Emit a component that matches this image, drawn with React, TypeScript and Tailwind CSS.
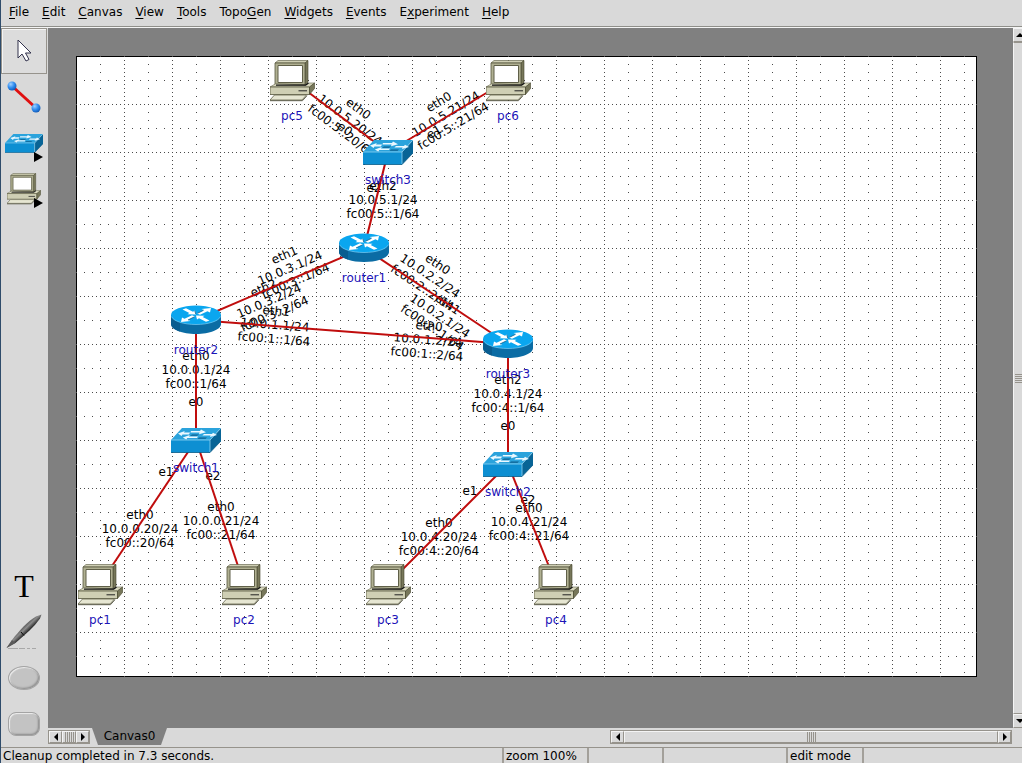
import type { ReactNode } from "react";

type NodeKind = "pc" | "switch" | "router";

interface TopoNode {
  id: string;
  kind: NodeKind;
  x: number;
  y: number;
}

interface LinkLabel {
  x: number;
  y: number;
  angle?: number;
  lines: string[];
}

const GRID = 24;
const CANVAS_W = 901;
const CANVAS_H = 621;

// Canvas coordinates, snapped to the grid.
const nodes: TopoNode[] = [
  { id: "pc5", kind: "pc", x: 216, y: 24 },
  { id: "pc6", kind: "pc", x: 432, y: 24 },
  { id: "switch3", kind: "switch", x: 312, y: 96 },
  { id: "router1", kind: "router", x: 288, y: 192 },
  { id: "router2", kind: "router", x: 120, y: 264 },
  { id: "router3", kind: "router", x: 432, y: 288 },
  { id: "switch1", kind: "switch", x: 120, y: 384 },
  { id: "switch2", kind: "switch", x: 432, y: 408 },
  { id: "pc1", kind: "pc", x: 24, y: 528 },
  { id: "pc2", kind: "pc", x: 168, y: 528 },
  { id: "pc3", kind: "pc", x: 312, y: 528 },
  { id: "pc4", kind: "pc", x: 480, y: 528 },
];

const links: [string, string][] = [
  ["pc5", "switch3"],
  ["pc6", "switch3"],
  ["switch3", "router1"],
  ["router1", "router2"],
  ["router1", "router3"],
  ["router2", "router3"],
  ["router2", "switch1"],
  ["router3", "switch2"],
  ["switch1", "pc1"],
  ["switch1", "pc2"],
  ["switch2", "pc3"],
  ["switch2", "pc4"],
];

const linkLabels: LinkLabel[] = [
  { x: 274, y: 64, angle: 36.9, lines: ["eth0", "10.0.5.20/24", "fc00:5::20/64"] },
  { x: 269, y: 73, angle: 36.9, lines: ["e0"] },
  { x: 370, y: 58, angle: -31, lines: ["eth0", "10.0.5.21/24", "fc00:5::21/64"] },
  { x: 358, y: 76, angle: -31, lines: ["e1"] },
  { x: 298, y: 132, lines: ["e2"] },
  { x: 307, y: 144, lines: ["eth2", "10.0.5.1/24", "fc00:5::1/64"] },
  { x: 214, y: 212, angle: -23.2, lines: ["eth1", "10.0.3.1/24", "fc00:3::1/64"] },
  { x: 193, y: 245, angle: -23.2, lines: ["eth2", "10.0.3.2/24", "fc00:3::2/64"] },
  { x: 354, y: 220, angle: 33.7, lines: ["eth0", "10.0.2.2/24", "fc00:2::2/64"] },
  { x: 364, y: 260, angle: 33.7, lines: ["eth1", "10.0.2.1/24", "fc00:2::1/64"] },
  { x: 199, y: 269, angle: 4.4, lines: ["eth1", "10.0.1.1/24", "fc00:1::1/64"] },
  { x: 352, y: 284, angle: 4.4, lines: ["eth0", "10.0.1.2/24", "fc00:1::2/64"] },
  { x: 120, y: 314, lines: ["eth0", "10.0.0.1/24", "fc00::1/64"] },
  { x: 120, y: 346, lines: ["e0"] },
  { x: 432, y: 338, lines: ["eth2", "10.0.4.1/24", "fc00:4::1/64"] },
  { x: 432, y: 370, lines: ["e0"] },
  { x: 90, y: 416, lines: ["e1"] },
  { x: 137, y: 420, lines: ["e2"] },
  { x: 64, y: 473, lines: ["eth0", "10.0.0.20/24", "fc00::20/64"] },
  { x: 145, y: 465, lines: ["eth0", "10.0.0.21/24", "fc00::21/64"] },
  { x: 394, y: 435, lines: ["e1"] },
  { x: 452, y: 444, lines: ["e2"] },
  { x: 363, y: 481, lines: ["eth0", "10.0.4.20/24", "fc00:4::20/64"] },
  { x: 453, y: 466, lines: ["eth0", "10.0.4.21/24", "fc00:4::21/64"] },
];

// label, index of the underlined letter
const menus: [string, number][] = [
  ["File", 0],
  ["Edit", 0],
  ["Canvas", 0],
  ["View", 0],
  ["Tools", 0],
  ["TopoGen", 4],
  ["Widgets", 0],
  ["Events", 0],
  ["Experiment", 1],
  ["Help", 0],
];

const nameOffset: Record<NodeKind, string> = {
  pc: "top-[29px]",
  switch: "top-[21px]",
  router: "top-[23px]",
};

function SwitchIcon({ className }: { className: string }) {
  return (
    <svg viewBox="0 0 50 26" className={className} aria-hidden>
      <path d="M0 13 11 1h39L39 13z" fill="#2ba3dc" />
      <path d="M0 13h39v12.500H0z" fill="#0d8fd2" />
      <path d="M39 13 50 1v13L39 25.500z" fill="#086496" />
      <path d="M0 13h39L50 1M39 13v12.500" fill="none" stroke="#8fd3f2" strokeWidth="0.800" />
      <path d="M0 25.500h39L50 14" fill="none" stroke="#075a87" strokeWidth="0.800" />
      <path d="M20 4h9l1-1.500 5 2.700-7 2 .6-1.600h-9.200zM33 7h8l1-1.300 4 2.300-7 2 .6-1.400h-8.200z" fill="#eaf8ff" />
      <path d="M19 5.500h-6l.8-1.500L7 6.500 10.500 9l1-1.600H18zM27 9.500h-9l.8-1.500-7 2.500 3.500 2 1-1.500H26z" fill="#eaf8ff" />
      <path d="M21 7.600h7l-2 1.200h-7zM28 10.600h8l-1.500 1.200h-8z" fill="#0c5f8e" />
    </svg>
  );
}

function RouterIcon({ className }: { className: string }) {
  return (
    <svg viewBox="0 0 50 30" className={className} aria-hidden>
      <path d="M0 10v9c0 5.500 11.200 10 25 10s25-4.500 25-10v-9z" fill="#0b6ca4" />
      <path d="M0 10v9c0 3 3.500 5.800 9 7.600V15z" fill="#095d90" />
      <ellipse cx="25" cy="10" rx="25" ry="9.500" fill="#0aa6ef" />
      <path d="M.4 11.500c2 4.500 12 8 24.600 8s22.600-3.500 24.600-8" fill="none" stroke="#7ccdf3" strokeWidth="0.700" />
      <path d="m11.500 4.500 3.500-1.300 7 3.600 2-1.200 1 3.900-8.500-.3 1.800-1.200z" fill="#fff" />
      <path d="m38.500 15.500-3.500 1.300-7-3.600-2 1.200-1-3.900 8.500.3-1.800 1.200z" fill="#fff" />
      <path d="m26 8.500 7-3.400-2.500-1.200L40 3l-1 4.500-2.500-1.200-7.500 3.500z" fill="#fff" />
      <path d="m24 11.500-7 3.400 2.500 1.200-9.500.9 1-4.500 2.500 1.200 7.500-3.500z" fill="#fff" />
      <path d="m26.500 8.300 6-3M17 15l6.500-3.200M23.800 5.800l1 3.400" fill="none" stroke="#0a5a88" strokeWidth="0.800" />
    </svg>
  );
}

function PcIcon({ className }: { className: string }) {
  return (
    <svg viewBox="0 0 45 42" className={className} aria-hidden>
      <path d="M5 3 8 .5h30L35 3z" fill="#cfcfb4" stroke="#55553c" strokeWidth="0.600" />
      <path d="M35 3 38 .5v22L35 25z" fill="#77775a" stroke="#44442c" strokeWidth="0.600" />
      <path d="M5 3h30v22H5z" fill="#b0b092" stroke="#55553c" strokeWidth="0.800" />
      <path d="M8 5.500h24.500v17H8z" fill="#fff" stroke="#5f5f48" />
      <path d="m0 27 6-3.500 30 1.700 3-2.200h5.500L39.500 27z" fill="#d8d8be" stroke="#66664d" strokeWidth="0.600" />
      <path d="M6 25.200h29.500l3-2.200" fill="none" stroke="#111" strokeWidth="1.200" />
      <path d="M0 27h39.500v7.500H0z" fill="#cfcfb4" stroke="#55553c" strokeWidth="0.800" />
      <path d="m39.500 27 5-4v5.500l-5 6z" fill="#77775a" stroke="#44442c" strokeWidth="0.600" />
      <path d="M28.500 30.800h8.500" stroke="#222" />
      <path d="m0 40 4.500-5h32L32 40z" fill="#e6e6d2" stroke="#66664d" strokeWidth="0.800" />
      <path d="M0 40.700h32.500l4.500-5" fill="none" stroke="#3f3f2b" strokeWidth="0.800" />
    </svg>
  );
}

function NodeIcon({ kind }: { kind: NodeKind }) {
  if (kind === "pc") return <PcIcon className="h-[42px] w-[45px]" />;
  if (kind === "switch") return <SwitchIcon className="h-[26px] w-[50px]" />;
  return <RouterIcon className="h-[30px] w-[50px]" />;
}

function ToolButton({
  label,
  active,
  flyout,
  children,
}: {
  label: string;
  active?: boolean;
  flyout?: boolean;
  children: ReactNode;
}) {
  return (
    <button
      type="button"
      aria-label={label}
      aria-pressed={active}
      className={
        active
          ? "relative flex h-[46px] w-[46px] items-center justify-center border border-[#96938c] bg-[#dcdcdc] shadow-[inset_1px_1px_0_#f4f4f4]"
          : "relative flex h-[46px] w-[46px] items-center justify-center"
      }
    >
      {children}
      {flyout && (
        <svg viewBox="0 0 9 10" className="absolute right-1 bottom-1 h-[10px] w-[9px]" aria-hidden>
          <path d="M0 0v10l9-5z" fill="#000" />
        </svg>
      )}
    </button>
  );
}

function Arrow({ dir }: { dir: "left" | "right" | "up" | "down" }) {
  const paths = {
    left: "M6 0v8L2 4z",
    right: "M2 0v8l4-4z",
    up: "M0 6h8L4 2z",
    down: "M0 2h8L4 6z",
  };
  return (
    <svg viewBox="0 0 8 8" className="h-2 w-2" aria-hidden>
      <path d={paths[dir]} fill="#000" />
    </svg>
  );
}

function Grip({ vertical }: { vertical?: boolean }) {
  return (
    <span className={vertical ? "flex flex-col gap-px" : "flex gap-px"}>
      {[0, 1, 2, 3, 4].map((i) => (
        <span key={i} className={vertical ? "h-px w-[10px] bg-[#96938c]" : "h-[10px] w-px bg-[#96938c]"} />
      ))}
    </span>
  );
}

const scrollBox =
  "flex shrink-0 items-center justify-center border border-t-[#f4f4f4] border-l-[#f4f4f4] border-r-[#96938c] border-b-[#96938c] bg-[#d9d9d9]";

function TopologyCanvas() {
  const byId = Object.fromEntries(nodes.map((n) => [n.id, n]));
  const cols = Array.from({ length: Math.floor(CANVAS_W / GRID) }, (_, i) => (i + 1) * GRID);
  const rows = Array.from({ length: Math.floor(CANVAS_H / GRID) }, (_, i) => (i + 1) * GRID);

  return (
    <div className="relative h-[621px] w-[901px] shrink-0 bg-white outline outline-1 -outline-offset-1 outline-black">
      <svg className="absolute inset-0 h-full w-full" shapeRendering="crispEdges" aria-hidden>
        {cols.map((x, i) => (
          <line key={x} x1={x + 0.5} x2={x + 0.5} y1={0} y2={CANVAS_H} stroke="#4a4a4a" strokeDasharray={i % 2 ? "1 3" : "1 7"} />
        ))}
        {rows.map((y, i) => (
          <line key={y} x1={0} x2={CANVAS_W} y1={y + 0.5} y2={y + 0.5} stroke="#4a4a4a" strokeDasharray={i % 2 ? "1 3" : "1 7"} />
        ))}
      </svg>

      {linkLabels.map((label, i) => (
        <div
          key={i}
          className="absolute text-center leading-[14px] whitespace-nowrap text-black"
          style={{
            left: label.x,
            top: label.y,
            transform: `translate(-50%, -50%) rotate(${label.angle ?? 0}deg)`,
          }}
        >
          {label.lines.map((line) => (
            <div key={line}>{line}</div>
          ))}
        </div>
      ))}

      <svg className="absolute inset-0 h-full w-full" aria-hidden>
        {links.map(([a, b]) => (
          <line
            key={a + b}
            x1={byId[a].x}
            y1={byId[a].y}
            x2={byId[b].x}
            y2={byId[b].y}
            stroke="#c00d0d"
            strokeWidth={2}
          />
        ))}
      </svg>

      {nodes.map((n) => (
        <button
          key={n.id}
          type="button"
          className="absolute h-0 w-0"
          style={{ left: n.x, top: n.y }}
        >
          <span
            className={
              n.kind === "pc"
                ? "absolute -top-5 -left-[22px] w-[45px]"
                : "absolute -translate-x-1/2 -translate-y-1/2"
            }
          >
            <NodeIcon kind={n.kind} />
          </span>
          <span
            className={`absolute -translate-x-1/2 leading-[14px] whitespace-nowrap text-[#1c14b8] ${nameOffset[n.kind]}`}
          >
            {n.id}
          </span>
        </button>
      ))}
    </div>
  );
}

export default function App() {
  return (
    <div className="flex h-screen flex-col overflow-hidden border-l border-[#2f4c6b] bg-[#d9d9d9] font-['DejaVu_Sans',sans-serif] text-[12px] text-black">
      <nav className="flex h-[27px] shrink-0 items-center gap-px border-b border-[#8f8f8a] px-[2px] pb-[3px]">
        {menus.map(([name, u]) => (
          <button key={name} type="button" className="px-[6px] leading-4">
            {name.slice(0, u)}
            <span className="underline underline-offset-2">{name[u]}</span>
            {name.slice(u + 1)}
          </button>
        ))}
      </nav>

      <div className="flex min-h-0 flex-1 border-t border-[#f4f4f4]">
        <aside className="flex w-[47px] shrink-0 flex-col justify-between">
          <div>
            <ToolButton label="Selection tool" active>
              <svg viewBox="0 0 16 24" className="h-6 w-4" aria-hidden>
                <path d="M2 1v18l4-4 4 7 3-1.500L9.500 14H15z" fill="#fff" stroke="#33334d" strokeLinejoin="round" />
              </svg>
            </ToolButton>
            <ToolButton label="Link tool">
              <svg viewBox="0 0 34 32" className="h-8 w-[34px]" aria-hidden>
                <defs>
                  <radialGradient id="ball" cx="0.350" cy="0.300" r="0.800">
                    <stop offset="0" stopColor="#9fd0ff" />
                    <stop offset="0.500" stopColor="#2f8cf0" />
                    <stop offset="1" stopColor="#0c4fa8" />
                  </radialGradient>
                </defs>
                <path d="m5 5 24 22" stroke="#e01010" strokeWidth="3" />
                <circle cx="5" cy="5" r="4.500" fill="url(#ball)" />
                <circle cx="29" cy="27" r="4.500" fill="url(#ball)" />
              </svg>
            </ToolButton>
            <ToolButton label="Link-layer nodes" flyout>
              <SwitchIcon className="h-5 w-[38px]" />
            </ToolButton>
            <ToolButton label="Network-layer nodes" flyout>
              <PcIcon className="h-8 w-[34px]" />
            </ToolButton>
          </div>
          <div>
            <ToolButton label="Text">
              <span className="font-['Liberation_Serif',serif] text-[32px] leading-8">T</span>
            </ToolButton>
            <ToolButton label="Marker">
              <svg viewBox="0 0 36 36" className="h-9 w-9" aria-hidden>
                <defs>
                  <linearGradient id="pen" x1="0" y1="0" x2="1" y2="1">
                    <stop offset="0.350" stopColor="#222" />
                    <stop offset="0.480" stopColor="#8c8c8c" />
                    <stop offset="0.580" stopColor="#111" />
                  </linearGradient>
                </defs>
                <path d="M2 34.500h28" stroke="#a8a8a8" strokeDasharray="10 1 6 2 3 2" />
                <path d="M.5 34 6 26C13 17 22 7 30 2.500L35.500.5l-1.500 4C28 13 20 20 10 28.500z" fill="url(#pen)" />
                <path d="M.5 34 6 26l3.500 3z" fill="#5a5a5a" />
                <path d="M15 18 18 21.500" stroke="#0a0a0a" />
              </svg>
            </ToolButton>
            <ToolButton label="Oval">
              <span className="h-6 w-8 rounded-[50%] border border-[#a4a4a4] bg-[#c3c3c3] shadow-[inset_1px_1px_1px_#eeeeee,inset_-1px_-1px_2px_#8a8a8a]" />
            </ToolButton>
            <ToolButton label="Rectangle">
              <span className="h-6 w-8 rounded-lg border border-[#a4a4a4] bg-[#c3c3c3] shadow-[inset_1px_1px_1px_#eeeeee,inset_-1px_-1px_2px_#8a8a8a]" />
            </ToolButton>
          </div>
        </aside>

        <main className="flex min-w-0 flex-1 flex-col">
          <div className="flex min-h-0 flex-1">
            <div className="min-w-0 flex-1 overflow-hidden bg-[#808080] p-7">
              <TopologyCanvas />
            </div>
            <div className="w-[9px] shrink-0 overflow-hidden">
              <div className="flex h-full w-[13px] flex-col">
                <button type="button" aria-label="Scroll up" className={`h-[14px] ${scrollBox}`}>
                  <Arrow dir="up" />
                </button>
                <div className="flex flex-1 items-center justify-center border border-t-[#96938c] border-r-[#96938c] border-b-[#96938c] border-l-[#f4f4f4]">
                  <Grip vertical />
                </div>
                <button type="button" aria-label="Scroll down" className={`h-[14px] ${scrollBox}`}>
                  <Arrow dir="down" />
                </button>
              </div>
            </div>
          </div>

          <div className="flex h-[19px] shrink-0 items-start justify-between pr-[10px]">
            <div className="flex">
              <div className="mt-[2px] flex h-[14px] border border-[#96938c]">
                <button type="button" aria-label="Previous canvas" className={`w-[13px] ${scrollBox}`}>
                  <Arrow dir="left" />
                </button>
                <span className={`w-[14px] ${scrollBox}`}>
                  <Grip />
                </span>
                <button type="button" aria-label="Next canvas" className={`w-[13px] ${scrollBox}`}>
                  <Arrow dir="right" />
                </button>
              </div>
              <button
                type="button"
                className="ml-[2px] h-[17px] w-[75px] bg-[#808080] text-center leading-[17px] [clip-path:polygon(0_0,100%_0,92%_100%,8%_100%)]"
              >
                Canvas0
              </button>
            </div>
            <div className="mt-[2px] flex h-[14px] w-5/12 border border-[#96938c]">
              <button type="button" aria-label="Scroll left" className={`w-[13px] ${scrollBox}`}>
                <Arrow dir="left" />
              </button>
              <span className={`flex-1 ${scrollBox}`}>
                <Grip />
              </span>
              <button type="button" aria-label="Scroll right" className={`w-[13px] ${scrollBox}`}>
                <Arrow dir="right" />
              </button>
            </div>
          </div>
        </main>
      </div>

      <footer className="flex h-4 shrink-0 divide-x-2 divide-[#a3a09a] border-t border-[#96938c] leading-4">
        <span className="min-w-0 flex-1 truncate pl-[2px]">Cleanup completed in 7.3 seconds.</span>
        <span className="w-[85px] pl-[2px]">zoom 100%</span>
        <span className="w-[75px]" />
        <span className="w-[124px]" />
        <span className="w-[76px] pl-[2px]">edit mode</span>
        <span className="w-[158px]" />
      </footer>
    </div>
  );
}
